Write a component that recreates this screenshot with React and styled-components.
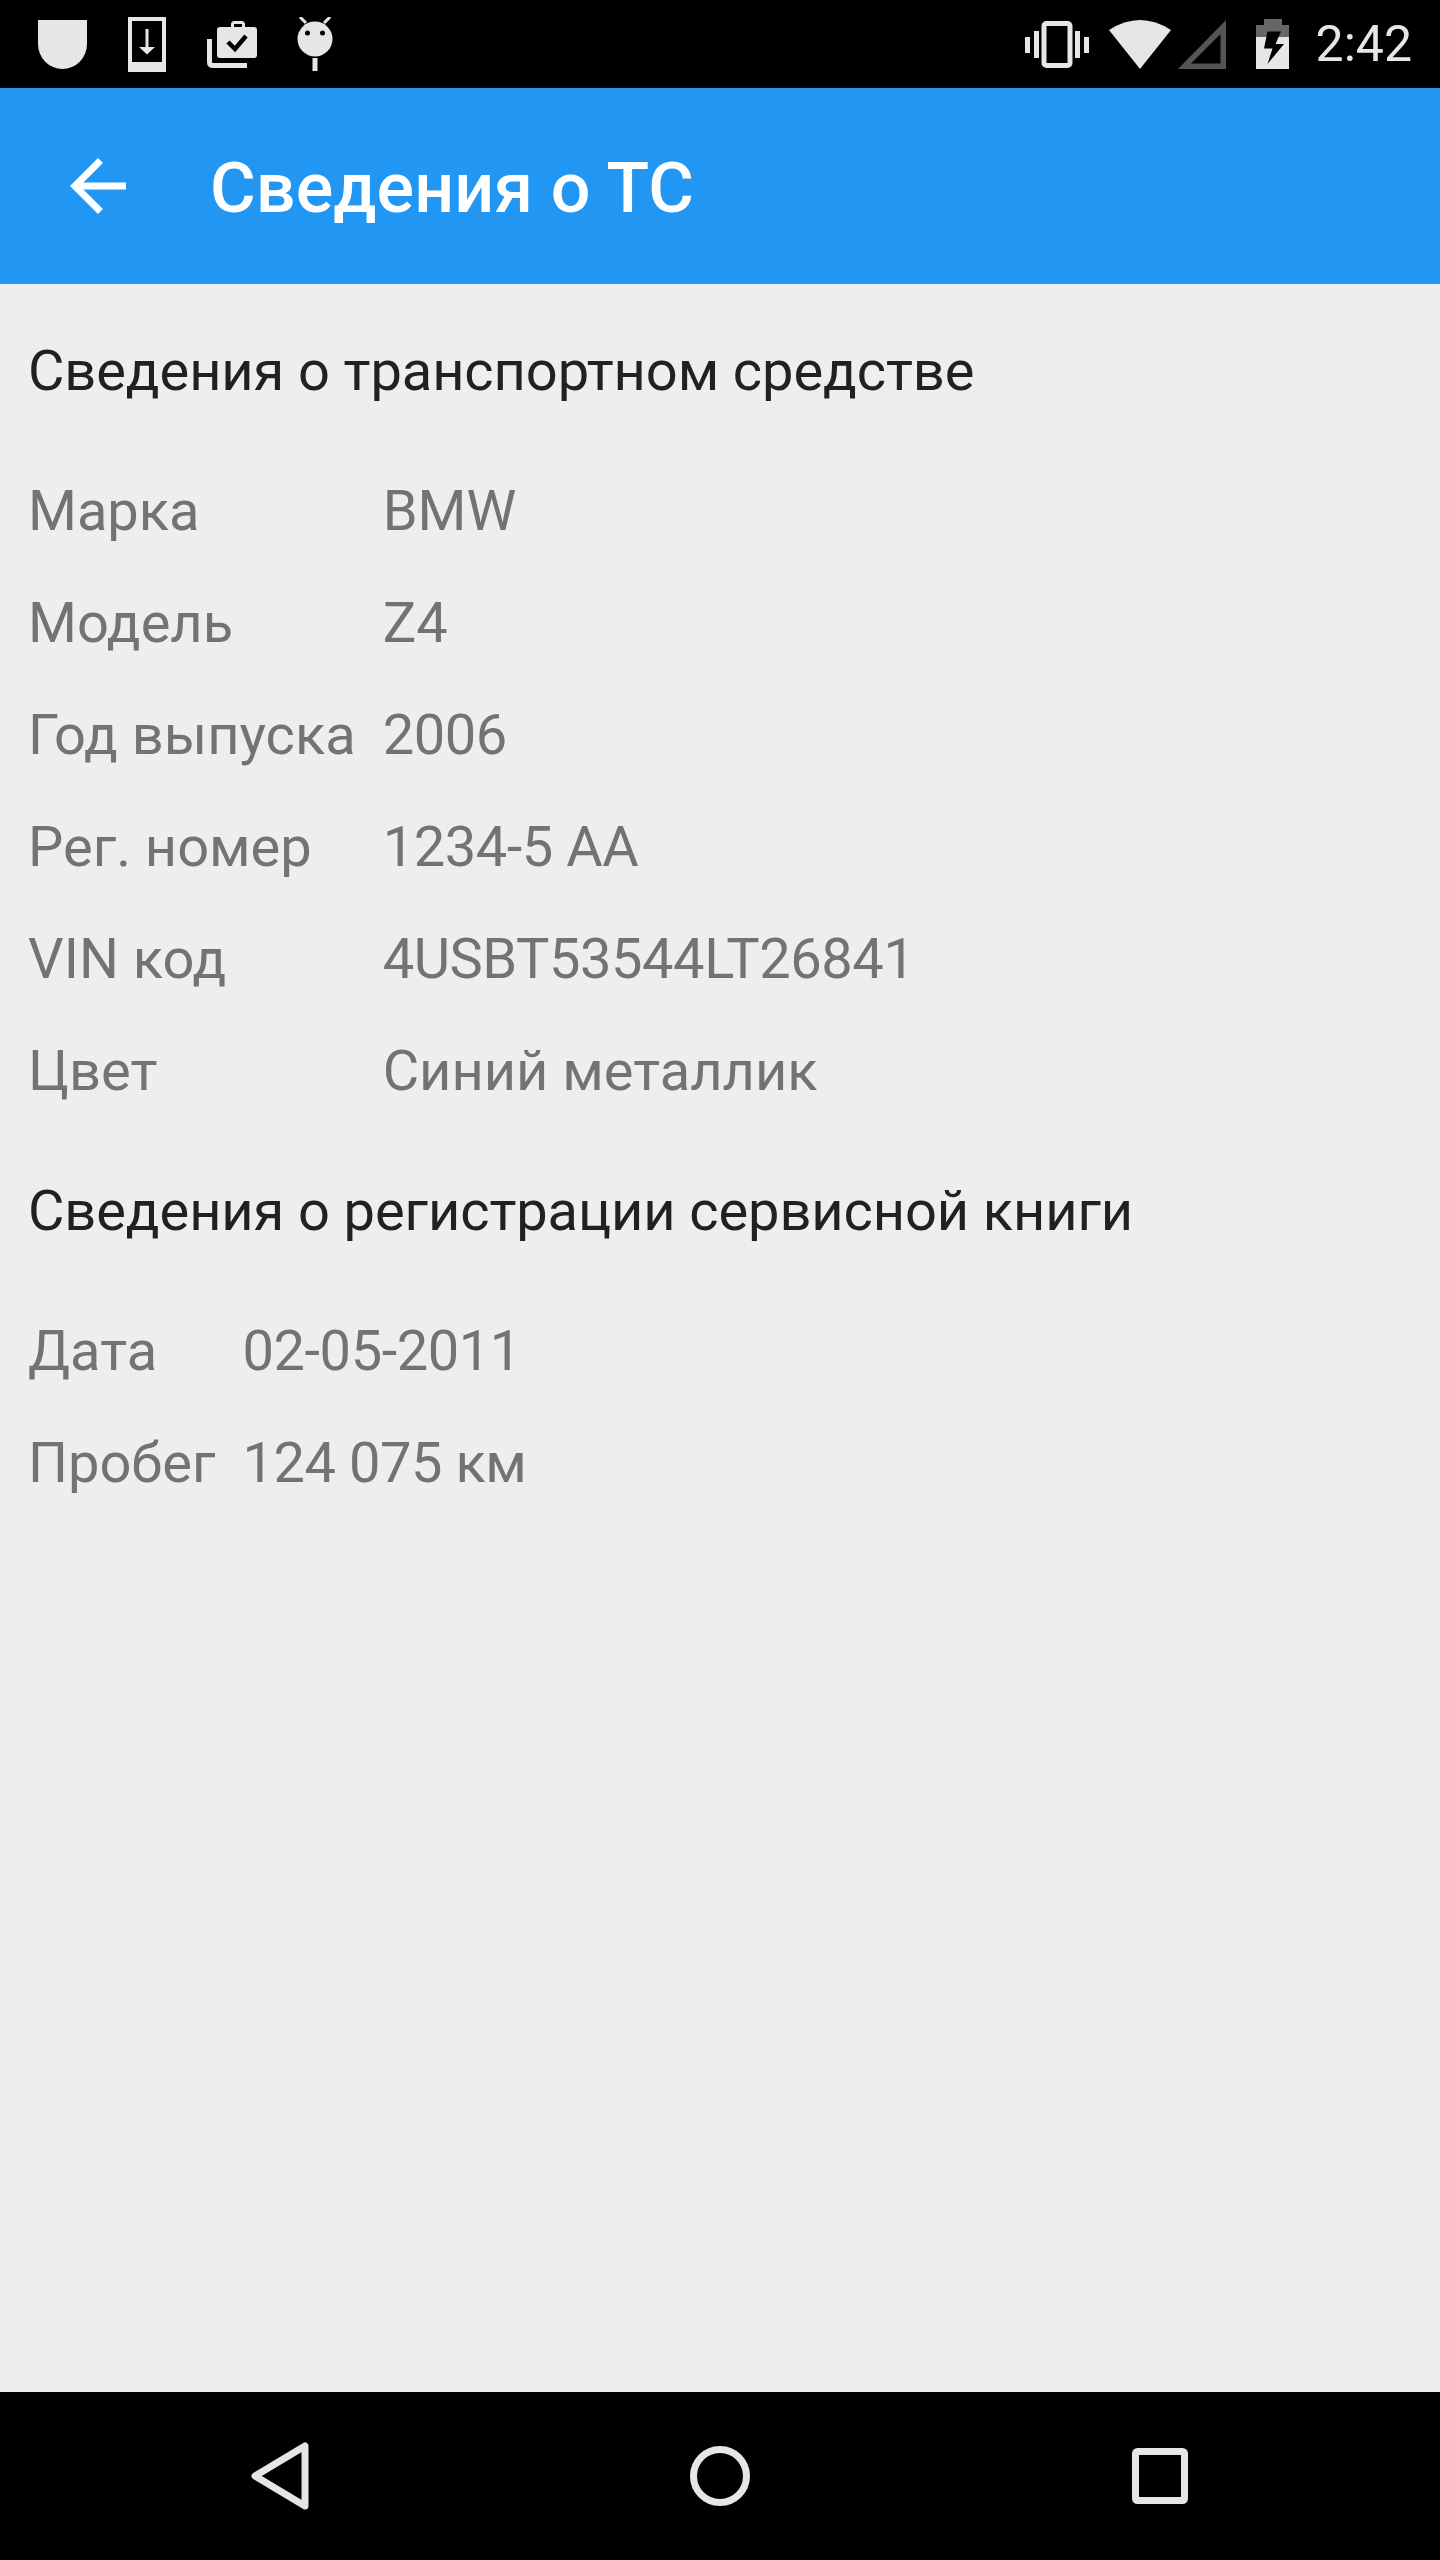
import React from 'react';
import styled, { createGlobalStyle } from 'styled-components';

const GlobalStyle = createGlobalStyle`
  body {
    margin: 0;
    font-family: Roboto, "Noto Sans", sans-serif;
  }
`;

const Screen = styled.div`
  display: flex;
  flex-direction: column;
  min-height: 2560px;
  background-color: #eeeeee;
`;

const StatusBar = styled.div`
  display: flex;
  justify-content: space-between;
  align-items: center;
  height: 88px;
  padding: 0 28px 0 38px;
  background-color: #000000;
`;

const StatusLeft = styled.div`
  display: flex;
  align-items: center;
  gap: 41px;
`;

const StatusRight = styled.div`
  display: flex;
  align-items: center;
`;

const Glyph = styled.svg`
  display: block;
  flex: none;
  margin-left: ${(p) => p.$ml || 0}px;
`;

const Clock = styled.span`
  margin-left: 27px;
  font-size: 50px;
  line-height: 88px;
  color: #e6e6e6;
`;

const AppBar = styled.div`
  display: flex;
  align-items: center;
  height: 196px;
  padding-left: 56px;
  background-color: #2196f3;
`;

const Title = styled.h1`
  margin: 3px 0 0 70px;
  font-size: 70px;
  font-weight: 500;
  letter-spacing: 0.1px;
  color: #ffffff;
`;

const Content = styled.div`
  flex: 1;
  padding: 31px 28px 0;
`;

const SectionTitle = styled.div`
  font-size: 56px;
  line-height: 112px;
  letter-spacing: -0.1px;
  color: #212121;
`;

const Details = styled.div`
  display: grid;
  grid-template-columns: max-content 1fr;
  column-gap: 27px;
  margin: 28px 0;
`;

const Cell = styled.div`
  font-size: 56px;
  line-height: 112px;
  letter-spacing: ${(p) => (p.$digits ? '-0.45px' : '0')};
  color: #737373;
`;

const NavBar = styled.div`
  display: flex;
  align-items: center;
  gap: 380px;
  height: 168px;
  padding-left: 250px;
  background-color: #000000;
`;

const vehicle = [
  ['Марка', 'BMW'],
  ['Модель', 'Z4'],
  ['Год выпуска', '2006'],
  ['Рег. номер', '1234-5 AA'],
  ['VIN код', '4USBT53544LT26841'],
  ['Цвет', 'Синий металлик'],
];

const book = [
  ['Дата', '02-05-2011'],
  ['Пробег', '124 075 км'],
];

const ICON = '#e6e6e6';

function DetailsTable({ rows }) {
  return (
    <Details>
      {rows.map(([label, value]) => (
        <React.Fragment key={label}>
          <Cell>{label}</Cell>
          <Cell $digits={/\d{2}/.test(value)}>{value}</Cell>
        </React.Fragment>
      ))}
    </Details>
  );
}

function StatusIcons() {
  return (
    <StatusLeft>
      <Glyph width="49" height="49" viewBox="0 0 49 49">
        <path fill={ICON} d="M0 0H49V24A24.5 25 0 0 1 0 24Z" />
      </Glyph>
      <Glyph width="38" height="55" viewBox="0 0 38 55">
        <path
          fill={ICON}
          fillRule="evenodd"
          d="M0 0H38V55H0ZM4 4V45H34V4ZM17.5 12H20.5V30H27L19 37.5L11 30H17.5Z"
        />
      </Glyph>
      <Glyph width="50" height="47" viewBox="0 0 50 47">
        <path
          fill={ICON}
          fillRule="evenodd"
          d="M13 6H24V3.5Q24 0 27.5 0H34.5Q38 0 38 3.500V6H47Q50 6 50 9V34Q50 37 47 37H13Q10 37 10 34V9Q10 6 13 6ZM27 6H35V3H27Z"
        />
        <path fill="none" stroke={ICON} strokeWidth="5" d="M2.500 18V41Q2.500 44.500 6 44.500H40" />
        <path fill="none" stroke="#000" strokeWidth="4.500" d="M21 21L28 28L39 15" />
      </Glyph>
      <Glyph $ml={-1} width="36" height="54" viewBox="0 0 36 54">
        <circle cx="18" cy="22" r="17.500" fill={ICON} />
        <path stroke={ICON} strokeWidth="3" d="M3 0L9 6M33 0L27 6" />
        <circle cx="10.500" cy="16" r="2.500" fill="#000" />
        <circle cx="25.500" cy="16" r="2.500" fill="#000" />
        <rect x="15.500" y="41" width="5" height="13" fill={ICON} />
      </Glyph>
    </StatusLeft>
  );
}

function SystemIcons() {
  return (
    <StatusRight>
      <Glyph width="64" height="47" viewBox="0 0 64 47">
        <rect x="19" y="2.500" width="26" height="42" rx="2.500" fill="none" stroke={ICON} strokeWidth="5" />
        <path fill={ICON} d="M0 16H5V32H0ZM9 10H14V37H9ZM50 10H55V37H50ZM59 16H64V32H59Z" />
      </Glyph>
      <Glyph $ml={20} width="62" height="49" viewBox="0 0 62 49">
        <path fill={ICON} d="M0 10Q31 -10 62 10L31 49Z" />
      </Glyph>
      <Glyph $ml={7} width="48" height="49" viewBox="0 0 48 49">
        <path fill="#555555" fillRule="evenodd" d="M0 49L48 0V49ZM13 43.500H42.500V14Z" />
      </Glyph>
      <Glyph $ml={30} width="33" height="50" viewBox="0 0 33 50">
        <path fill="#666666" d="M8 0H26V6H33V18H0V6H8Z" />
        <rect y="18" width="33" height="32" fill={ICON} />
        <path fill="#000" d="M11.500 12.500H25L19.500 25H28L11.500 45L16.500 29.500H8Z" />
      </Glyph>
      <Clock>2:42</Clock>
    </StatusRight>
  );
}

function App() {
  return (
    <Screen>
      <GlobalStyle />
      <StatusBar>
        <StatusIcons />
        <SystemIcons />
      </StatusBar>
      <AppBar>
        <Glyph width="84" height="84" viewBox="0 0 24 24">
          <path fill="#fff" d="M20 11H7.830l5.590-5.590L12 4l-8 8 8 8 1.410-1.410L7.830 13H20v-2z" />
        </Glyph>
        <Title>Сведения о ТС</Title>
      </AppBar>
      <Content>
        <SectionTitle>Сведения о транспортном средстве</SectionTitle>
        <DetailsTable rows={vehicle} />
        <SectionTitle>Сведения о регистрации сервисной книги</SectionTitle>
        <DetailsTable rows={book} />
      </Content>
      <NavBar>
        <Glyph width="60" height="70" viewBox="0 0 60 70">
          <path fill="none" stroke={ICON} strokeWidth="7" strokeLinejoin="round" d="M55 5V65L5 35Z" />
        </Glyph>
        <Glyph width="60" height="60" viewBox="0 0 60 60">
          <circle cx="30" cy="30" r="26.500" fill="none" stroke={ICON} strokeWidth="7" />
        </Glyph>
        <Glyph $ml={2} width="56" height="56" viewBox="0 0 56 56">
          <rect x="3.500" y="3.500" width="49" height="49" rx="2" fill="none" stroke={ICON} strokeWidth="7" />
        </Glyph>
      </NavBar>
    </Screen>
  );
}

export default App;
